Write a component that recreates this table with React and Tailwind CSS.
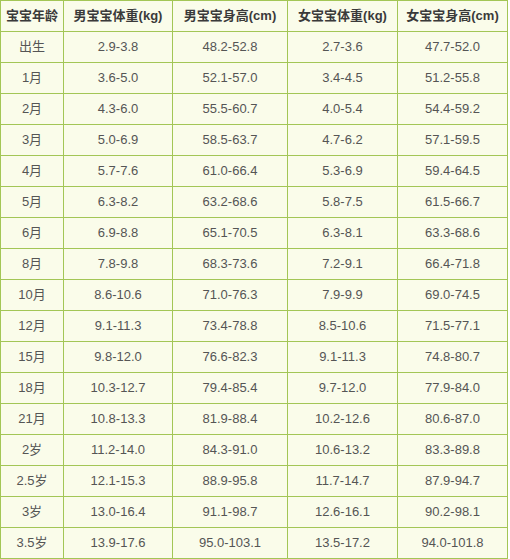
const headers = ['宝宝年龄', '男宝宝体重(kg)', '男宝宝身高(cm)', '女宝宝体重(kg)', '女宝宝身高(cm)'];

const rows = [
    ['出生', '2.9-3.8', '48.2-52.8', '2.7-3.6', '47.7-52.0'],
    ['1月', '3.6-5.0', '52.1-57.0', '3.4-4.5', '51.2-55.8'],
    ['2月', '4.3-6.0', '55.5-60.7', '4.0-5.4', '54.4-59.2'],
    ['3月', '5.0-6.9', '58.5-63.7', '4.7-6.2', '57.1-59.5'],
    ['4月', '5.7-7.6', '61.0-66.4', '5.3-6.9', '59.4-64.5'],
    ['5月', '6.3-8.2', '63.2-68.6', '5.8-7.5', '61.5-66.7'],
    ['6月', '6.9-8.8', '65.1-70.5', '6.3-8.1', '63.3-68.6'],
    ['8月', '7.8-9.8', '68.3-73.6', '7.2-9.1', '66.4-71.8'],
    ['10月', '8.6-10.6', '71.0-76.3', '7.9-9.9', '69.0-74.5'],
    ['12月', '9.1-11.3', '73.4-78.8', '8.5-10.6', '71.5-77.1'],
    ['15月', '9.8-12.0', '76.6-82.3', '9.1-11.3', '74.8-80.7'],
    ['18月', '10.3-12.7', '79.4-85.4', '9.7-12.0', '77.9-84.0'],
    ['21月', '10.8-13.3', '81.9-88.4', '10.2-12.6', '80.6-87.0'],
    ['2岁', '11.2-14.0', '84.3-91.0', '10.6-13.2', '83.3-89.8'],
    ['2.5岁', '12.1-15.3', '88.9-95.8', '11.7-14.7', '87.9-94.7'],
    ['3岁', '13.0-16.4', '91.1-98.7', '12.6-16.1', '90.2-98.1'],
    ['3.5岁', '13.9-17.6', '95.0-103.1', '13.5-17.2', '94.0-101.8'],
];

const font = { fontFamily: '"Liberation Sans", "Noto Sans CJK SC", sans-serif' };

export default function App() {
    return (
        <div className="bg-white w-[510px] h-[559px]">
            <div
                className="w-[508px] grid grid-cols-[62px_108px_114px_109px_109px] auto-rows-[30px] gap-px p-px bg-[#a3c656]"
                style={font}
            >
                {headers.map((h) => (
                    <div key={h} className="bg-[#fafcea] flex items-center justify-center text-[13px] font-bold text-[#3a3a3a]">
                        {h}
                    </div>
                ))}
                {rows.map((row) =>
                    row.map((cell, i) => (
                        <div key={row[0] + i} className="bg-[#fafcea] flex items-center justify-center text-[13px] text-[#555]">
                            {cell}
                        </div>
                    ))
                )}
            </div>
        </div>
    );
}
